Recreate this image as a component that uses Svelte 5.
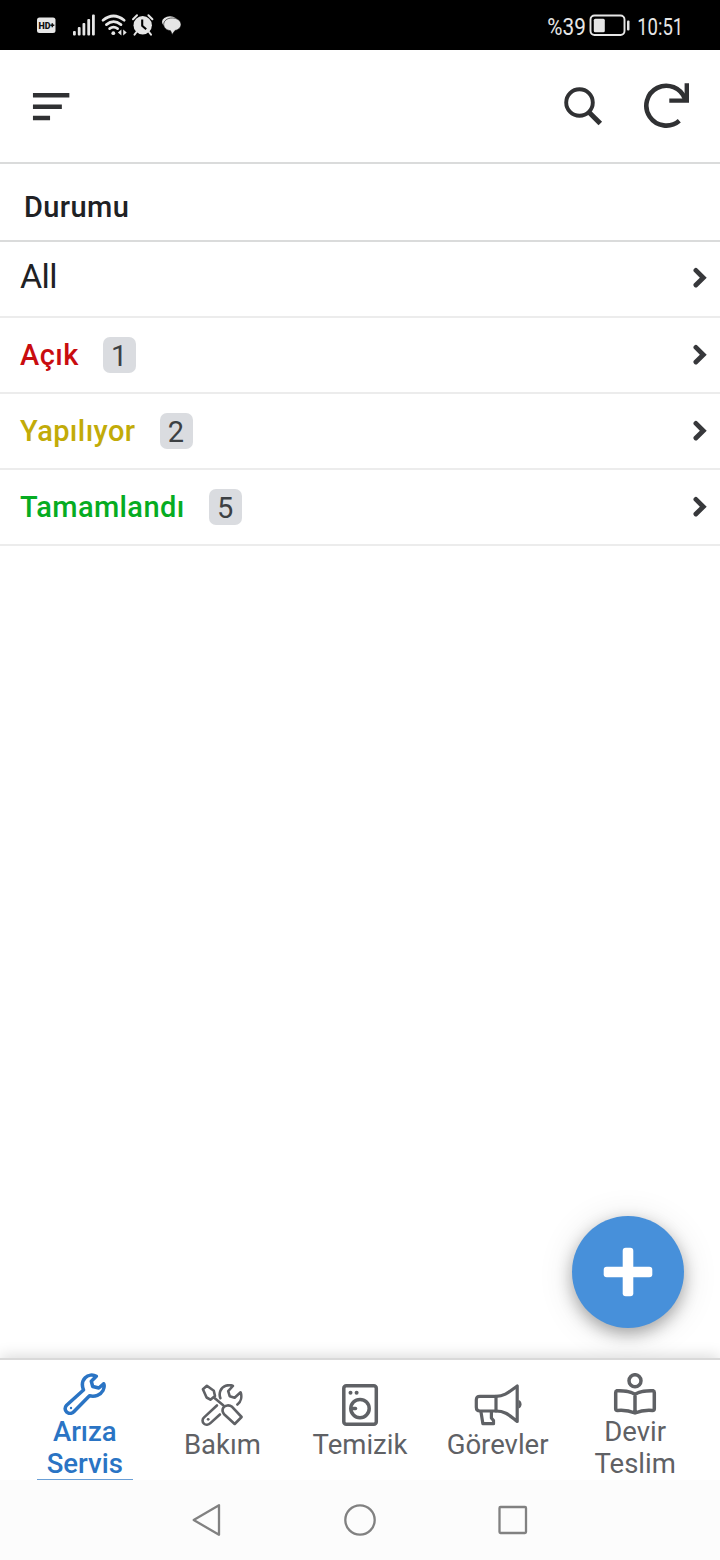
<script lang="ts">
	interface Status {
		label: string;
		count?: number;
		tone: string;
	}

	interface Tab {
		id: string;
		lines: string[];
	}

	const statuses: Status[] = [
		{ label: 'All', tone: 'all' },
		{ label: 'Açık', count: 1, tone: 'open' },
		{ label: 'Yapılıyor', count: 2, tone: 'progress' },
		{ label: 'Tamamlandı', count: 5, tone: 'done' }
	];

	const tabs: Tab[] = [
		{ id: 'service', lines: ['Arıza', 'Servis'] },
		{ id: 'maintenance', lines: ['Bakım'] },
		{ id: 'cleaning', lines: ['Temizik'] },
		{ id: 'tasks', lines: ['Görevler'] },
		{ id: 'handover', lines: ['Devir', 'Teslim'] }
	];

	let active = $state('service');
</script>

<div class="screen">
	<div class="status-bar">
		<svg class="status-icons" width="150" height="50" viewBox="0 0 150 50">
			<rect x="1" y="17.5" width="18.5" height="15.5" rx="2.5" fill="#e6e6e6" />
			<text x="2.5" y="28.8" font-size="9.5" font-weight="900" textLength="12" lengthAdjust="spacingAndGlyphs" fill="#111">HD</text>
			<path d="M14.3 25.2h4M16.3 23.2v4" stroke="#111" stroke-width="1.5" />
			<g fill="#e6e6e6">
				<rect x="37" y="31" width="2.8" height="4.5" rx="1" />
				<rect x="41.8" y="27" width="2.8" height="8.5" rx="1" />
				<rect x="46.5" y="23" width="2.8" height="12.5" rx="1" />
				<rect x="51.3" y="19" width="2.8" height="16.5" rx="1" />
				<rect x="56" y="14.5" width="2.8" height="21" rx="1" />
			</g>
			<g fill="none" stroke="#e6e6e6" stroke-width="2.7" stroke-linecap="round">
				<path d="M67 20.2Q77.5 11.8 88.2 20.2" />
				<path d="M70.4 24.6Q77.5 18.8 85 24.6" />
				<path d="M73.6 28.6Q77.5 25.6 81.6 28.6" />
			</g>
			<circle cx="77.3" cy="33.2" r="1.9" fill="#e6e6e6" />
			<path d="M85.4 29.6v5.8l-3.5-2.9zM87.2 29.6v5.8l3.5-2.9z" fill="#e6e6e6" />
			<circle cx="106.7" cy="25.3" r="9.2" fill="#e6e6e6" />
			<path d="M97 19.2l4-4M112.4 15.2l4 4M100.5 32l-2 2.6M113 32l2 2.6" stroke="#e6e6e6" stroke-width="2" stroke-linecap="round" />
			<path d="M106.2 19.5v6.3l4 3.4" fill="none" stroke="#000" stroke-width="2.1" />
			<ellipse cx="134" cy="22" rx="8" ry="5.7" fill="#e6e6e6" />
			<path d="M136.2 18c5 0 8.8 2.7 8.8 6.4 0 3-2.5 5.3-6 6.1l-2.8 3.9-1.7-3.7c-4.3-.6-6.8-3.1-6.8-6.3 0-3.7 3.6-6.4 8.5-6.4z" fill="#e6e6e6" stroke="#000" stroke-width=".6" />
		</svg>
		<svg class="battery" width="174" height="50" viewBox="0 0 174 50">
			<text x="1.3" y="35" font-size="23.5" textLength="38.5" lengthAdjust="spacingAndGlyphs" fill="#e6e6e6">%39</text>
			<rect x="44.5" y="15.5" width="34" height="19.5" rx="4" fill="none" stroke="#e6e6e6" stroke-width="1.9" />
			<rect x="47.8" y="18.7" width="11" height="13.5" rx="1.5" fill="#e6e6e6" />
			<rect x="81" y="20.5" width="2.5" height="10" rx="1" fill="#e6e6e6" />
			<text x="91.2" y="35" font-size="23.5" textLength="46" lengthAdjust="spacingAndGlyphs" fill="#e6e6e6">10:51</text>
		</svg>
	</div>

	<header class="toolbar">
		<button class="icon-btn menu" aria-label="Menu">
			<svg width="38" height="30" viewBox="0 0 38 30">
				<path d="M3.2 4.2H35.1M3.2 15.7H27.6M3.2 26.9H15.8" stroke="#303133" stroke-width="4.5" stroke-linecap="square" />
			</svg>
		</button>
		<button class="icon-btn" aria-label="Search">
			<svg width="40" height="42" viewBox="0 0 40 42">
				<circle cx="15.5" cy="17.5" r="13.3" fill="none" stroke="#303133" stroke-width="3.9" />
				<path d="M25 27.3L36.3 38.5" stroke="#303133" stroke-width="5" />
			</svg>
		</button>
		<button class="icon-btn refresh" aria-label="Refresh">
			<svg width="48" height="48" viewBox="0 0 48 48">
				<path d="M43 17A19.9 19.9 0 1 0 37.3 38.7" fill="none" stroke="#303133" stroke-width="4.6" />
				<path d="M44.8 1.2V18.6H27.3" fill="none" stroke="#303133" stroke-width="4.4" />
			</svg>
		</button>
	</header>

	<main>
		<h1>Durumu</h1>
		<ul>
			{#each statuses as status (status.label)}
				<li>
					<span class="label {status.tone}">{status.label}</span>
					{#if status.count}
						<span class="count">{status.count}</span>
					{/if}
					<svg class="chevron" width="14" height="22" viewBox="0 0 14 22">
						<path d="M2.9 3.4L10.3 10.700L2.900 18" fill="none" stroke="#37383b" stroke-width="4.800" stroke-linecap="round" />
					</svg>
				</li>
			{/each}
		</ul>
		<button class="fab" aria-label="Add">
			<svg width="50" height="50" viewBox="0 0 50 50">
				<rect x="19.7" y=".7" width="10.6" height="48.6" rx="3" fill="#fff" />
				<rect x=".7" y="19.7" width="48.6" height="10.6" rx="3" fill="#fff" />
			</svg>
		</button>
	</main>

	<nav class="tabs">
		{#each tabs as tab (tab.id)}
			<button
				class="tab"
				class:active={active === tab.id}
				class:tall={tab.lines.length > 1}
				onclick={() => (active = tab.id)}
			>
				<svg width="48" height="42" viewBox="0 0 48 42" fill="none" stroke="currentColor" stroke-width="3.5" stroke-linejoin="round" stroke-linecap="round">
					{#if tab.id === 'service'}
						<path d="M22.5 17L5.6 32.2C3.5 34.4 3.8 37.4 5.7 39.1C7.7 41 10.8 40.8 12.8 38.7L28.5 22.8C34 24.2 39.6 22 42 17.5C43 15.5 43.6 12.7 42.7 10.7L37.8 15L31.700 13.500L30.300 8.300L35.300 3.300C31.800 1.200 27 1.800 24.200 4.700C21 7.900 20.800 12.600 22.500 17Z" />
						<circle cx="10" cy="35" r="1.2" fill="currentColor" stroke="none" />
					{:else if tab.id === 'maintenance'}
						<g stroke-width="2.6" transform="translate(.4 0)">
							<path d="M4.500 5.300L8.500 1.800L15.400 6.700L16.600 12L12 15.700L8.200 13.500Z" />
							<path d="M15.500 13.500L24.800 21.200" />
							<path d="M25 23.500C26.800 21 31 20.700 33.700 22.800L43.200 33L36.300 40L25.700 30.300C24 28 23.500 25.800 25 23.500Z" />
							<path d="M22 14.200C20 9.300 22.300 3.500 27.300 1.800C29.500 1 32.500 .9 34.500 2L29.800 7.200L31.300 12.200L36.200 13.700L42.200 8.300C43.700 12.500 42.700 17.500 39 20.500" />
							<path d="M18.500 21.500L5.700 33.400C3.700 35.200 3.700 38 5.500 39.600C7.200 41.200 10.200 40.900 12 39.100L21.500 30.500" />
						</g>
						<circle cx="10.200" cy="35.300" r="1.400" fill="currentColor" stroke="none" />
					{:else if tab.id === 'cleaning'}
						<rect x="7.800" y="1.800" width="32.500" height="38.400" rx="2.500" />
						<circle cx="24" cy="24.600" r="9.200" />
						<path d="M15.500 24.500H19.500" />
						<circle cx="14.500" cy="8.700" r="2" fill="currentColor" stroke="none" />
						<circle cx="20.600" cy="8.700" r="2" fill="currentColor" stroke="none" />
					{:else if tab.id === 'tasks'}
						<g stroke-width="3.200">
							<path d="M21.500 12.300H6C3.400 12.300 2.300 13.500 2.300 16V23.200C2.300 25.600 3.500 27 6 27H21.500M22 12.300V27" />
							<path d="M22 12.300C31 12.300 35.500 7.500 43.200 2V37.500C35.500 31.500 31.500 27 22 27" />
							<path d="M7 28L8.900 39.700H19.500V36.500L17.400 34V28" />
						</g>
						<path d="M44.500 16C48.500 17 48.500 23.500 44.500 24.500Z" fill="currentColor" stroke="none" />
					{:else}
						<circle cx="24" cy="7.700" r="6" />
						<path d="M24 21.300C18 17.500 12.500 17.700 5.900 17.800C5 18 4.700 18.500 4.700 19.500V35.800C4.700 37 5.500 37.500 6.500 37.500C13 37 18 37.500 24 40C30 37.500 35 37 41.500 37.500C42.500 37.500 43.300 37 43.300 35.800V19.500C43.300 18.500 43 18 42.100 17.800C35.500 17.700 30 17.500 24 21.300ZM24 21.300V39.500" />
					{/if}
				</svg>
				<span class="caption">
					{#each tab.lines as line}
						<span>{line}</span>
					{/each}
				</span>
			</button>
		{/each}
	</nav>

	<div class="system-nav">
		<svg width="32" height="34" viewBox="0 0 32 34">
			<path d="M27 2.200V31.800L1.700 17Z" />
		</svg>
		<svg width="34" height="34" viewBox="0 0 34 34">
			<circle cx="17" cy="17" r="14.700" />
		</svg>
		<svg width="32" height="34" viewBox="0 0 32 34">
			<rect x="3.500" y="4" width="26.500" height="26" rx="1" />
		</svg>
	</div>
</div>

<style>
	:global(body) {
		margin: 0;
		background: #fff;
	}

	.screen {
		width: 720px;
		height: 1560px;
		display: flex;
		flex-direction: column;
		background: #fff;
		font-family: Roboto, 'Liberation Sans', sans-serif;
		color: #202124;
		overflow: hidden;
	}

	svg {
		display: block;
		flex: none;
	}

	button {
		border: 0;
		padding: 0;
		margin: 0;
		background: none;
		font: inherit;
		color: inherit;
	}

	.status-bar {
		flex: none;
		height: 50px;
		display: flex;
		justify-content: space-between;
		padding-left: 36px;
		background: #000;
	}

	.toolbar {
		box-sizing: border-box;
		flex: none;
		height: 114px;
		display: flex;
		align-items: center;
		padding: 0 30px 0 32px;
		border-bottom: 2px solid #dadbdb;
	}

	.menu {
		margin-right: auto;
	}

	.refresh {
		margin-left: 38px;
	}

	main {
		flex: 1;
		min-height: 0;
		position: relative;
	}

	h1 {
		box-sizing: border-box;
		height: 78px;
		margin: 0;
		padding: 9px 24px 0;
		border-bottom: 2px solid #dadbdb;
		font-size: 29px;
		font-weight: 500;
		line-height: 69px;
		letter-spacing: 0.4px;
	}

	ul {
		list-style: none;
		margin: 0;
		padding: 0;
	}

	li {
		box-sizing: border-box;
		height: 76px;
		display: flex;
		align-items: center;
		padding: 0 13px 0 20px;
		border-bottom: 2px solid #ececec;
	}

	li:first-child {
		padding-bottom: 2px;
	}

	.label {
		font-size: 29px;
		font-weight: 500;
		line-height: 36px;
		letter-spacing: 0.4px;
	}

	.all {
		font-size: 34px;
		font-weight: 400;
		letter-spacing: -0.6px;
		padding-bottom: 4px;
	}

	.open {
		color: #c90c0f;
	}

	.progress {
		color: #c2ab08;
	}

	.done {
		color: #06ac22;
	}

	.count {
		width: 33px;
		height: 36px;
		margin-left: 24px;
		border-radius: 7px;
		background: #dadce0;
		color: #3c4043;
		font-size: 29px;
		line-height: 38px;
		text-align: center;
	}

	.chevron {
		margin-left: auto;
	}

	.fab {
		position: absolute;
		right: 36px;
		bottom: 30px;
		width: 112px;
		height: 112px;
		display: flex;
		align-items: center;
		justify-content: center;
		border-radius: 50%;
		background: #4790da;
		box-shadow:
			0 6px 16px rgba(0, 0, 0, 0.3),
			0 4px 36px rgba(0, 0, 0, 0.12);
	}

	.tabs {
		box-sizing: border-box;
		flex: none;
		height: 122px;
		display: flex;
		position: relative;
		padding: 0 16px;
		border-top: 2px solid #d9d9d9;
		background: #fff;
		box-shadow: 0 -2px 14px rgba(0, 0, 0, 0.15);
	}

	.tab {
		flex: 1;
		display: flex;
		flex-direction: column;
		align-items: center;
		justify-content: center;
		gap: 3px;
		padding-top: 5px;
		color: #5f6165;
		font-size: 27.5px;
		line-height: 32px;
	}

	.tall {
		justify-content: flex-end;
		gap: 0;
	}

	.caption {
		box-sizing: border-box;
		width: 96px;
		display: flex;
		flex-direction: column;
		align-items: center;
	}

	.tall .caption {
		height: 65px;
		padding-top: 1px;
		border-bottom: 1px solid transparent;
	}

	.active {
		color: #2a74c4;
		font-weight: 500;
	}

	.active .caption {
		border-bottom-color: #6a9fd6;
	}

	.system-nav {
		flex: none;
		position: relative;
		height: 80px;
		display: flex;
		align-items: center;
		justify-content: center;
		gap: 119px;
		background: #fcfcfc;
	}

	.system-nav svg {
		fill: none;
		stroke: #818181;
		stroke-width: 2.3;
		stroke-linejoin: round;
	}
</style>
